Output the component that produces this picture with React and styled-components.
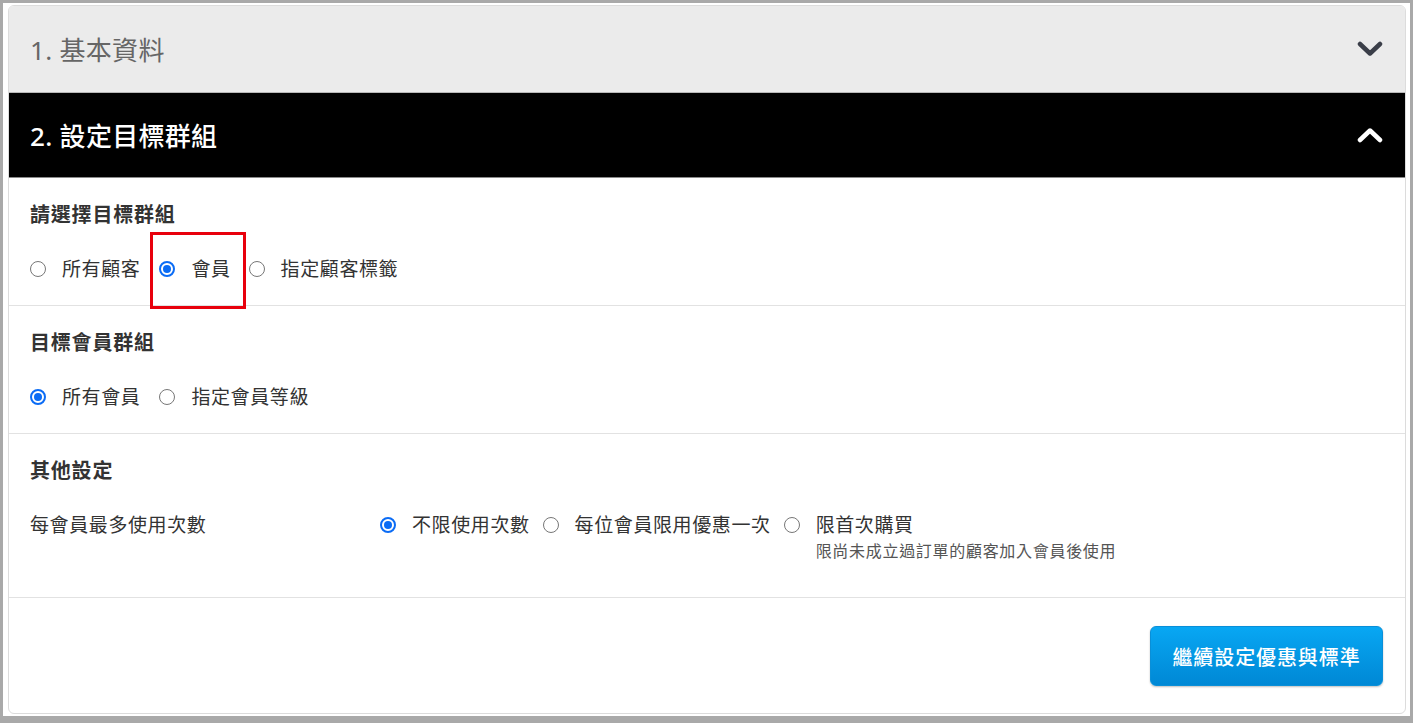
import React from 'react';
import styled, { createGlobalStyle } from 'styled-components';

const GlobalStyle = createGlobalStyle`
  * { box-sizing: border-box; }
  body {
    margin: 0;
    background: #a9a9a9;
    font-family: "Noto Sans", "Noto Sans CJK TC", sans-serif;
  }
`;

const Frame = styled.div`
  margin: 3px 3px 0 3px;
  height: 713px;
  background: #fff;
  padding: 2px 4px 2px 5px;
`;

const Card = styled.div`
  height: 100%;
  border: 1px solid #dcdcdc;
  border-radius: 6px;
  overflow: hidden;
  display: flex;
  flex-direction: column;
  background: #fff;
`;

const StepHeader = styled.div`
  display: flex;
  align-items: center;
  justify-content: space-between;
  height: ${p => p.$h}px;
  padding: 0 22px 0 21px;
  background: ${p => (p.$active ? '#000' : '#ebebeb')};
  color: ${p => (p.$active ? '#fff' : '#666')};
  border-bottom: 1px solid ${p => (p.$active ? '#8a8a8a' : '#b9b9b9')};
  font-size: 26px;
  font-weight: ${p => (p.$active ? 500 : 400)};
  letter-spacing: 0.3px;
`;

const Section = styled.div`
  position: relative;
  padding: 22px 22px ${p => p.$pb || 21}px 21px;
  border-bottom: 1px solid #e2e2e2;
`;

const Title = styled.div`
  height: 30px;
  line-height: 30px;
  font-size: 20px;
  font-weight: 700;
  color: #333;
  letter-spacing: 0.8px;
  margin-bottom: 24px;
`;

const RadioRow = styled.div`
  display: flex;
  align-items: flex-start;
`;

const Option = styled.label`
  display: flex;
  align-items: flex-start;
  margin-right: ${p => p.$gap || 19}px;
`;

const Dot = styled.span`
  width: 16px;
  height: 16px;
  margin-top: 7px;
  flex: none;
  border-radius: 50%;
  border: ${p => (p.$on ? '2px solid #0b6cf5' : '1px solid #777')};
  display: flex;
  align-items: center;
  justify-content: center;
  &::after {
    content: '';
    width: 8px;
    height: 8px;
    border-radius: 50%;
    background: ${p => (p.$on ? '#0b6cf5' : 'transparent')};
  }
`;

const OptionText = styled.div`
  margin-left: 16px;
  display: flex;
  flex-direction: column;
`;

const Label = styled.span`
  font-size: 19px;
  line-height: 30px;
  color: #333;
  letter-spacing: 0.6px;
`;

const Note = styled.span`
  font-size: 16px;
  line-height: 22px;
  color: #555;
  letter-spacing: 0.7px;
`;

const FieldRow = styled.div`
  display: flex;
  align-items: flex-start;
`;

const FieldLabel = styled.div`
  width: 350px;
  flex: none;
  font-size: 19px;
  line-height: 30px;
  color: #333;
  letter-spacing: 0.6px;
`;

const Highlight = styled.div`
  position: absolute;
  left: 141px;
  top: 54px;
  width: 96px;
  height: 77px;
  border: 3px solid #e8000c;
`;

const Footer = styled.div`
  flex: 1;
  display: flex;
  justify-content: flex-end;
  align-items: flex-start;
  padding: 28px 22px 0 0;
`;

const NextButton = styled.button`
  width: 233px;
  height: 60px;
  border: 1px solid #0a8fd8;
  border-radius: 6px;
  background: linear-gradient(#08a7f3, #0088d5);
  color: #fff;
  font-family: "Noto Sans", "Noto Sans CJK TC", sans-serif;
  font-size: 20px;
  font-weight: 500;
  letter-spacing: 0.9px;
  box-shadow: 0 1px 2px rgba(0, 0, 0, 0.25);
  cursor: pointer;
`;

const Chevron = ({ up, color }) => (
  <svg width="26" height="16" viewBox="0 0 26 16">
    <polyline
      points={up ? '3,13 13,3.5 23,13' : '3,3 13,12.5 23,3'}
      fill="none"
      stroke={color}
      strokeWidth="4.5"
      strokeLinecap="round"
      strokeLinejoin="round"
    />
  </svg>
);

const Radio = ({ on, children, note, gap }) => (
  <Option $gap={gap}>
    <Dot $on={on} />
    <OptionText>
      <Label>{children}</Label>
      {note && <Note>{note}</Note>}
    </OptionText>
  </Option>
);

export default function App() {
  return (
    <>
      <GlobalStyle />
      <Frame>
        <Card>
          <StepHeader $h={87}>
            <span>1. 基本資料</span>
            <Chevron color="#3a3e48" />
          </StepHeader>
          <StepHeader $h={85} $active>
            <span>2. 設定目標群組</span>
            <Chevron up color="#fff" />
          </StepHeader>

          <Section>
            <Title>請選擇目標群組</Title>
            <RadioRow>
              <Radio>所有顧客</Radio>
              <Radio on gap={18}>會員</Radio>
              <Radio>指定顧客標籤</Radio>
            </RadioRow>
            <Highlight />
          </Section>

          <Section>
            <Title>目標會員群組</Title>
            <RadioRow>
              <Radio on gap={19}>所有會員</Radio>
              <Radio>指定會員等級</Radio>
            </RadioRow>
          </Section>

          <Section $pb={35}>
            <Title>其他設定</Title>
            <FieldRow>
              <FieldLabel>每會員最多使用次數</FieldLabel>
              <RadioRow>
                <Radio on gap={13}>不限使用次數</Radio>
                <Radio gap={13}>每位會員限用優惠一次</Radio>
                <Radio note="限尚未成立過訂單的顧客加入會員後使用">限首次購買</Radio>
              </RadioRow>
            </FieldRow>
          </Section>

          <Footer>
            <NextButton>繼續設定優惠與標準</NextButton>
          </Footer>
        </Card>
      </Frame>
    </>
  );
}
